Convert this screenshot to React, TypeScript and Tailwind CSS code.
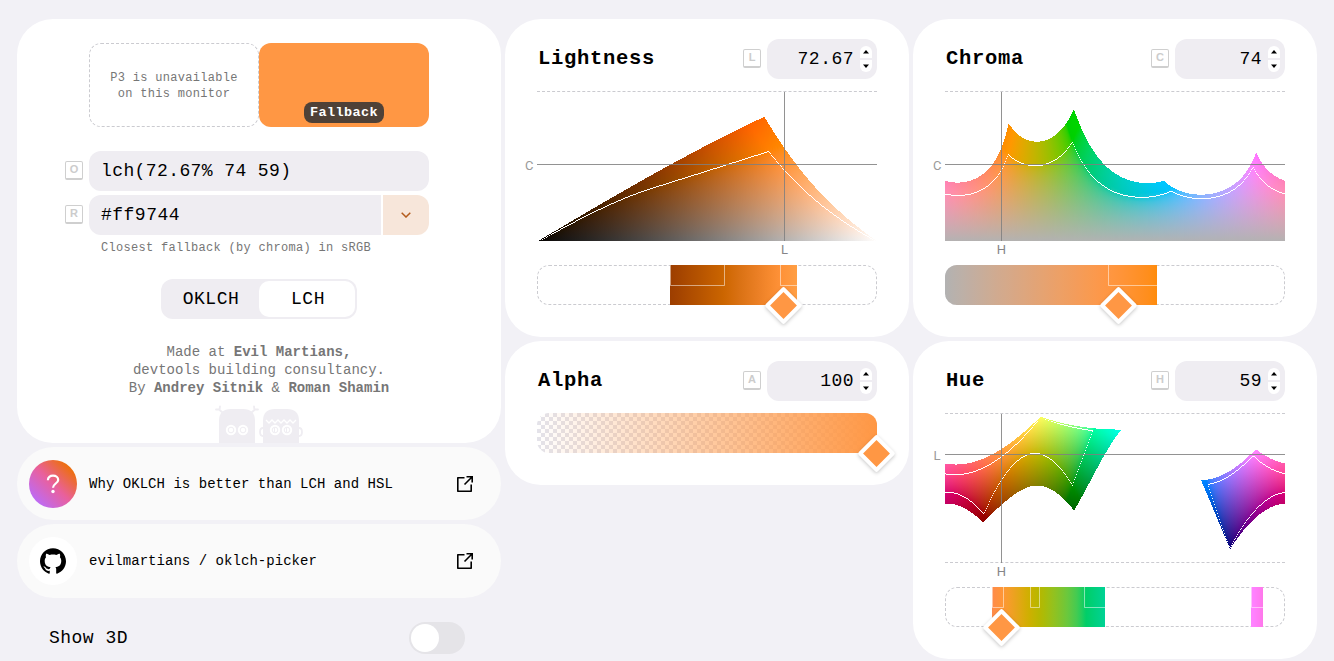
import type { ReactNode } from "react";

type Rgb = [number, number, number];
type ColorAt = (x: number, y: number) => [number, number, number];

const ACCENT = "#ff9744";
const CHART_W = 340;
const CHART_H = 150;
const L_MAX = 100;
const C_MAX = 145;
const H_MAX = 360;
const BASE = { l: 72.67, c: 74, h: 59 };

function lchToLinear(l: number, c: number, h: number): Rgb {
  const a = c * Math.cos((h * Math.PI) / 180);
  const b = c * Math.sin((h * Math.PI) / 180);
  const fy = (l + 16) / 116;
  const inv = (v: number) => (v ** 3 > 216 / 24389 ? v ** 3 : (116 * v - 16) / (24389 / 27));
  const x = inv(fy + a / 500) * (0.3457 / 0.3585);
  const y = inv(fy);
  const z = inv(fy - b / 200) * (0.2958 / 0.3585);
  return [
    x * 3.1341359569958707 - y * 1.6173863321612538 - z * 0.4906619460083532,
    x * -0.978795502912089 + y * 1.916254567259524 + z * 0.03344273116131949,
    x * 0.07195537988411677 - y * 0.2289768264158322 + z * 1.405386058324125,
  ];
}

const inside = (v: Rgb) => v.every((n) => n >= -0.0001 && n <= 1.0001);

const toP3 = ([r, g, b]: Rgb): Rgb => [
  0.8225 * r + 0.1775 * g,
  0.0332 * r + 0.9668 * g,
  0.0171 * r + 0.0724 * g + 0.9105 * b,
];

function css(v: Rgb) {
  const parts = v.map((n) => {
    const k = Math.min(1, Math.max(0, n));
    return Math.round(255 * (k <= 0.0031308 ? 12.92 * k : 1.055 * k ** (1 / 2.4) - 0.055));
  });
  return `rgb(${parts.join(",")})`;
}

interface Run {
  x: number;
  y0: number;
  y1: number;
  stops: { at: number; color: string }[];
}

function scan(colorAt: ColorAt) {
  const runs: Run[] = [];
  const dots: [number, number][] = [];
  for (let x = 0; x < CHART_W; x++) {
    let start = -1;
    let prevSrgb = false;
    let prevP3 = false;
    for (let y = 0; y <= CHART_H; y++) {
      const lin = y < CHART_H ? lchToLinear(...colorAt(x, y)) : null;
      const p3 = lin ? inside(toP3(lin)) : false;
      const srgb = lin ? inside(lin) : false;
      if (p3 && start < 0) start = y;
      if (!p3 && start >= 0) {
        const stops = [];
        const steps = Math.max(1, Math.ceil((y - start) / 5));
        for (let i = 0; i <= steps; i++) {
          const at = i / steps;
          stops.push({ at, color: css(lchToLinear(...colorAt(x, start + at * (y - 1 - start)))) });
        }
        runs.push({ x, y0: start, y1: y, stops });
        start = -1;
      }
      if (p3 && prevP3 && srgb !== prevSrgb) dots.push([x, srgb ? y : y - 1]);
      prevSrgb = srgb;
      prevP3 = p3;
    }
  }
  return { runs, dots };
}

const CHARTS = {
  l: scan((x, y) => [(x / CHART_W) * L_MAX, ((CHART_H - y) / CHART_H) * C_MAX, BASE.h]),
  c: scan((x, y) => [BASE.l, ((CHART_H - y) / CHART_H) * C_MAX, (x / CHART_W) * H_MAX]),
  h: scan((x, y) => [((CHART_H - y) / CHART_H) * L_MAX, BASE.c, (x / CHART_W) * H_MAX]),
};

interface ChartProps {
  id: "l" | "c" | "h";
  lineX: number;
  lineY: number;
  labelX: string;
  labelY: string;
  bottom?: boolean;
}

function Chart({ id, lineX, lineY, labelX, labelY, bottom }: ChartProps) {
  const { runs, dots } = CHARTS[id];
  return (
    <div
      className={
        "relative mt-3 h-[150px] w-[340px] border-t border-dashed border-[#cbcbd0] " +
        (bottom ? "border-b" : "")
      }
    >
      <svg
        className="absolute -top-px left-0 overflow-visible"
        width={CHART_W}
        height={CHART_H}
        shapeRendering="crispEdges"
      >
        <defs>
          {runs.map((r, i) => (
            <linearGradient
              key={i}
              id={`${id}${i}`}
              gradientUnits="userSpaceOnUse"
              x1="0"
              x2="0"
              y1={r.y0}
              y2={r.y1}
            >
              {r.stops.map((s) => (
                <stop key={s.at} offset={s.at} stopColor={s.color} />
              ))}
            </linearGradient>
          ))}
        </defs>
        {runs.map((r, i) => (
          <rect key={i} x={r.x} y={r.y0} width="1" height={r.y1 - r.y0} fill={`url(#${id}${i})`} />
        ))}
        <path d={dots.map(([x, y]) => `M${x} ${y}h1v1h-1z`).join("")} fill="#fff" />
        <path d={`M0 ${lineY}h340v1h-340zM${lineX} 1h1v149h-1z`} fill="#7f7f7f" fillOpacity=".85" />
      </svg>
      <span
        className="absolute -left-3 w-2 text-center font-['Roboto',sans-serif] text-[13px] leading-4 text-[#9a9a9a]"
        style={{ top: lineY - 7 }}
      >
        {labelY}
      </span>
      <span
        className="absolute top-[150px] w-4 text-center font-['Roboto',sans-serif] text-[13px] leading-4 text-[#858588]"
        style={{ left: lineX - 7.5 }}
      >
        {labelX}
      </span>
    </div>
  );
}

interface Segment {
  from: number;
  to: number;
}

function Thumb({ x }: { x: number }) {
  return (
    <span
      className="absolute top-[26.500px] size-[27px] rotate-45 rounded-[2px] border-4 border-white bg-[#ff9744] shadow-[1px_1px_4px_rgba(0,0,0,0.22)]"
      style={{ left: x - 13.5 }}
    />
  );
}

function Slider({
  id,
  segments,
  boxes,
  value,
  colorAt,
}: {
  id: string;
  segments: Segment[];
  boxes: string;
  value: number;
  colorAt: (x: number) => [number, number, number];
}) {
  return (
    <div className="relative mt-6 h-10 w-[340px] rounded-xl border border-dashed border-[#cbcbd0]">
      <div className="absolute -inset-px overflow-hidden rounded-xl">
        <svg width="340" height="40" className="block">
          <defs>
            {segments.map((s, i) => (
              <linearGradient key={i} id={`slider-${id}${i}`}>
                {Array.from({ length: 25 }, (_, k) => (
                  <stop
                    key={k}
                    offset={k / 24}
                    stopColor={css(lchToLinear(...colorAt(s.from + ((s.to - s.from) * k) / 24)))}
                  />
                ))}
              </linearGradient>
            ))}
          </defs>
          {segments.map((s, i) => (
            <rect
              key={i}
              x={s.from}
              width={s.to - s.from}
              height="40"
              fill={`url(#slider-${id}${i})`}
            />
          ))}
          <path d={boxes} fill="none" stroke="#fff" strokeOpacity=".5" />
        </svg>
      </div>
      <div className="absolute -inset-px">
        <Thumb x={value} />
      </div>
    </div>
  );
}

function Key({ children }: { children: ReactNode }) {
  return (
    <span className="mb-[2px] flex h-[19px] w-[18px] shrink-0 items-center justify-center rounded-[2px] border border-b-2 border-[#cfcfcf] font-['Liberation_Sans',sans-serif] text-[11px] leading-none font-bold text-[#cccccc]">
      {children}
    </span>
  );
}

function NumberField({ value }: { value: string }) {
  return (
    <div className="ml-[6px] flex h-10 w-[110px] items-center justify-end rounded-xl bg-[#efedf2] pr-[5px]">
      <span className="pt-px text-[18px] tracking-[0.48px]">{value}</span>
      <span className="ml-[6px] flex flex-col gap-[2px]">
        <span className="flex h-3 w-3 items-center justify-center rounded-t-[6px] bg-white">
          <svg width="6" height="4" viewBox="0 0 6 4">
            <path d="M0 3.600 3 .1 6 3.600z" />
          </svg>
        </span>
        <span className="flex h-3 w-3 items-center justify-center rounded-b-[6px] bg-white">
          <svg width="6" height="4" viewBox="0 0 6 4">
            <path d="M0 .4 3 3.900 6 .4z" />
          </svg>
        </span>
      </span>
    </div>
  );
}

function Card({
  title,
  hotkey,
  value,
  children,
}: {
  title: string;
  hotkey: string;
  value: string;
  children: ReactNode;
}) {
  return (
    <section className="w-[404px] rounded-[36px] bg-white px-8 pt-5 pb-8">
      <header className="flex h-10 items-center">
        <h2 className="mr-auto pt-px pl-px text-[20.500px] font-bold tracking-[0.7px]">{title}</h2>
        <Key>{hotkey}</Key>
        <NumberField value={value} />
      </header>
      {children}
    </section>
  );
}

function Martians() {
  const eye = (cx: number, key: string) => (
    <g key={key}>
      <circle cx={cx} cy="25" r="5.200" fill="#fff" />
      <circle cx={cx} cy="25" r="2.800" fill="#fff" stroke="#efedf2" strokeWidth="1" />
    </g>
  );
  return (
    <svg width="90" height="38" viewBox="0 0 90 38" fill="#efedf2">
      <path d="M5 38V16Q5 4 17 4h12q12 0 12 12v22z" />
      <path d="M49 38V16Q49 4 61 4h12q12 0 12 12v22z" />
      <g fill="none" stroke="#efedf2" strokeWidth="1.800" strokeLinecap="round">
        <path d="M9 8 5 4.500H2M5.500 5 6 1.500M37 8l4-3.500h3M40.500 5 40 1.500" />
        <path d="M49 23c-4 0-4 8 0 8M85 23c4 0 4 8 0 8" />
      </g>
      <path
        d="m52 15 3 3 3-3 3 3 3-3 3 3 3-3 3 3 3-3 3 3 3-3"
        fill="none"
        stroke="#fff"
        strokeWidth="1.300"
      />
      {eye(17, "a")}
      {eye(29, "b")}
      {eye(61, "c")}
      {eye(73, "d")}
      <path d="M60.500 23v4M72.500 23v4" stroke="#efedf2" />
    </svg>
  );
}

function ExternalLink() {
  return (
    <svg
      className="mr-[27px] ml-auto"
      width="18"
      height="18"
      viewBox="0 0 18 18"
      fill="none"
      stroke="#000"
      strokeWidth="1.600"
    >
      <path d="M8.500 2.800H1.800v13.400h13.400V9.500" strokeLinejoin="round" />
      <path d="M10.500 1.800h5.700V7.500M16.200 1.800 8.500 9.500" />
    </svg>
  );
}

function LinkRow({ icon, children }: { icon: ReactNode; children: ReactNode }) {
  return (
    <a className="flex items-center rounded-[37px] bg-[#fafafa] pl-3">
      {icon}
      <span className="ml-3 pt-px text-[14px] tracking-[0.04px]">{children}</span>
      <ExternalLink />
    </a>
  );
}

export default function App() {
  return (
    <main className="flex h-[661px] w-[1334px] items-start gap-1 overflow-hidden bg-[#f2f1f6] pt-[19px] pl-[17px] font-['Liberation_Mono',monospace] text-black">
      <div className="flex w-[484px] flex-col gap-1">
        <section className="flex h-[424px] flex-col items-center rounded-[36px] bg-white pt-6">
          <div className="flex h-[84px] w-[340px]">
            <div className="flex w-[170px] items-center justify-center rounded-xl border border-dashed border-[#cbcbd0] pt-[2px] text-center text-[12px] leading-4 tracking-[0.3px] text-[#767676]">
              P3 is unavailable
              <br />
              on this monitor
            </div>
            <div className="flex w-[170px] items-end justify-center rounded-xl bg-[#ff9744] pb-1">
              <span className="flex h-[21px] w-20 items-center justify-center rounded-lg bg-[#4f4137] pt-px text-[13.500px] font-bold tracking-[0.4px] text-white">
                Fallback
              </span>
            </div>
          </div>
          <div className="mt-6 mr-6 flex w-[364px] items-center gap-[6px]">
            <Key>O</Key>
            <div className="flex h-10 w-[340px] items-center rounded-xl bg-[#efedf2] pt-px pl-3 text-[18px] tracking-[0.4px]">
              lch(72.67% 74 59)
            </div>
          </div>
          <div className="mt-1 mr-6 flex w-[364px] items-center gap-[6px]">
            <Key>R</Key>
            <div className="flex h-10 w-[340px] gap-[2px]">
              <div className="flex w-[292px] items-center rounded-l-xl bg-[#efedf2] pt-px pl-3 text-[18px] tracking-[0.48px]">
                #ff9744
              </div>
              <div className="flex w-[46px] items-center justify-center rounded-r-xl bg-[#f7e6da]">
                <svg
                  width="10"
                  height="6"
                  viewBox="0 0 10 6"
                  fill="none"
                  stroke="#b45c1d"
                  strokeWidth="1.500"
                >
                  <path d="m.7.7 4.300 4.300L9.300.7" />
                </svg>
              </div>
            </div>
          </div>
          <p className="mt-[5px] w-[316px] text-[12px] leading-4 tracking-[0.3px] text-[#767676]">
            Closest fallback (by chroma) in sRGB
          </p>
          <div className="mt-[23px] flex h-10 w-[196px] rounded-xl bg-[#efedf2] p-[2px] text-[18px] tracking-[0.48px]">
            <span className="flex w-24 items-center justify-center pt-px">OKLCH</span>
            <span className="flex w-24 items-center justify-center rounded-[10px] bg-white pt-px pl-[2px]">
              LCH
            </span>
          </div>
          <p className="mt-6 text-center text-[14px] leading-[18px] text-[#767676]">
            Made at <b>Evil Martians,</b>
            <br />
            devtools building consultancy.
            <br />
            By <b>Andrey Sitnik</b> &amp; <b>Roman Shamin</b>
          </p>
          <div className="mt-auto">
            <Martians />
          </div>
        </section>
        <div className="grid h-[73px]">
          <LinkRow
            icon={
              <span className="flex size-12 items-center justify-center rounded-full bg-[linear-gradient(45deg,#b86cff_10%,#e9609c_50%,#ed7000_88%)]">
                <svg width="14" height="20" viewBox="0 0 14 20" fill="none">
                  <path
                    d="M1.900 6.200C1.900 3.300 4 1.700 7 1.700s5.200 1.700 5.200 4.200c0 3.400-5.200 3.900-5.200 7.800"
                    stroke="#fff"
                    strokeWidth="2.200"
                  />
                  <circle cx="7" cy="17.500" r="1.700" fill="#fff" />
                </svg>
              </span>
            }
          >
            Why OKLCH is better than LCH and HSL
          </LinkRow>
        </div>
        <div className="grid h-[74px]">
          <LinkRow
            icon={
              <span className="flex size-12 items-center justify-center rounded-full bg-white">
                <svg width="26" height="26" viewBox="0 0 24 24">
                  <path d="M12 .297c-6.630 0-12 5.373-12 12 0 5.303 3.438 9.800 8.205 11.385.6.113.820-.258.820-.577 0-.285-.010-1.040-.015-2.040-3.338.724-4.042-1.610-4.042-1.610C4.422 18.070 3.633 17.700 3.633 17.700c-1.087-.744.084-.729.084-.729 1.205.084 1.838 1.236 1.838 1.236 1.070 1.835 2.809 1.305 3.495.998.108-.776.417-1.305.760-1.605-2.665-.3-5.466-1.332-5.466-5.930 0-1.310.465-2.380 1.235-3.220-.135-.303-.540-1.523.105-3.176 0 0 1.005-.322 3.300 1.230.960-.267 1.980-.399 3-.405 1.020.006 2.040.138 3 .405 2.280-1.552 3.285-1.230 3.285-1.230.645 1.653.240 2.873.120 3.176.765.840 1.230 1.910 1.230 3.220 0 4.610-2.805 5.625-5.475 5.920.420.360.810 1.096.810 2.220 0 1.606-.015 2.896-.015 3.286 0 .315.210.690.825.570C20.565 22.092 24 17.592 24 12.297c0-6.627-5.373-12-12-12" />
                </svg>
              </span>
            }
          >
            evilmartians / oklch-picker
          </LinkRow>
        </div>
        <div className="mt-5 flex h-8 items-center justify-between pr-9 pl-8">
          <span className="pt-px text-[18px] tracking-[0.48px]">Show 3D</span>
          <span className="flex h-8 w-14 items-center rounded-full bg-[#e5e4e8] p-[2px]">
            <span className="size-7 rounded-full bg-white" />
          </span>
        </div>
      </div>

      <div className="flex flex-col gap-1">
        <Card title="Lightness" hotkey="L" value="72.67">
          <Chart id="l" lineX={247} lineY={73} labelX="L" labelY="C" />
          <Slider
            id="l"
            segments={[{ from: 133, to: 260 }]}
            boxes="M133.500 0v20.500h54V0M243.500 0v20.500h17"
            value={246.5}
            colorAt={(x) => [(x / CHART_W) * L_MAX, BASE.c, BASE.h]}
          />
        </Card>
        <Card title="Alpha" hotkey="A" value="100">
          <div className="relative mt-3 h-10 w-[340px]">
            <svg width="340" height="40" className="block rounded-xl">
              <defs>
                <pattern id="checks" width="8" height="8" patternUnits="userSpaceOnUse">
                  <rect width="8" height="8" fill="#fff" />
                  <path d="M0 0h4v4H0zM4 4h4v4H4z" fill="#e4e3ea" />
                </pattern>
                <linearGradient id="alpha">
                  <stop offset="0" stopColor={ACCENT} stopOpacity="0" />
                  <stop offset="1" stopColor={ACCENT} />
                </linearGradient>
              </defs>
              <rect width="340" height="40" fill="url(#checks)" />
              <rect width="340" height="40" fill="url(#alpha)" />
            </svg>
            <Thumb x={339.5} />
          </div>
        </Card>
      </div>

      <div className="flex flex-col gap-1">
        <Card title="Chroma" hotkey="C" value="74">
          <Chart id="c" lineX={56} lineY={73} labelX="H" labelY="C" />
          <Slider
            id="c"
            segments={[{ from: 0, to: 212 }]}
            boxes="M163.500 0v20.500h49"
            value={173.5}
            colorAt={(x) => [BASE.l, (x / CHART_W) * C_MAX, BASE.h]}
          />
        </Card>
        <Card title="Hue" hotkey="H" value="59">
          <Chart id="h" lineX={56} lineY={41} labelX="H" labelY="L" bottom />
          <Slider
            id="h"
            segments={[
              { from: 47, to: 160 },
              { from: 306, to: 318 },
            ]}
            boxes="M47.500 0v20.500h11V0M85.500 0v20.500h9V0M139.500 0v20.500h21M306.500 0v20.500h12"
            value={56.5}
            colorAt={(x) => [BASE.l, BASE.c, (x / CHART_W) * H_MAX]}
          />
        </Card>
      </div>
    </main>
  );
}
